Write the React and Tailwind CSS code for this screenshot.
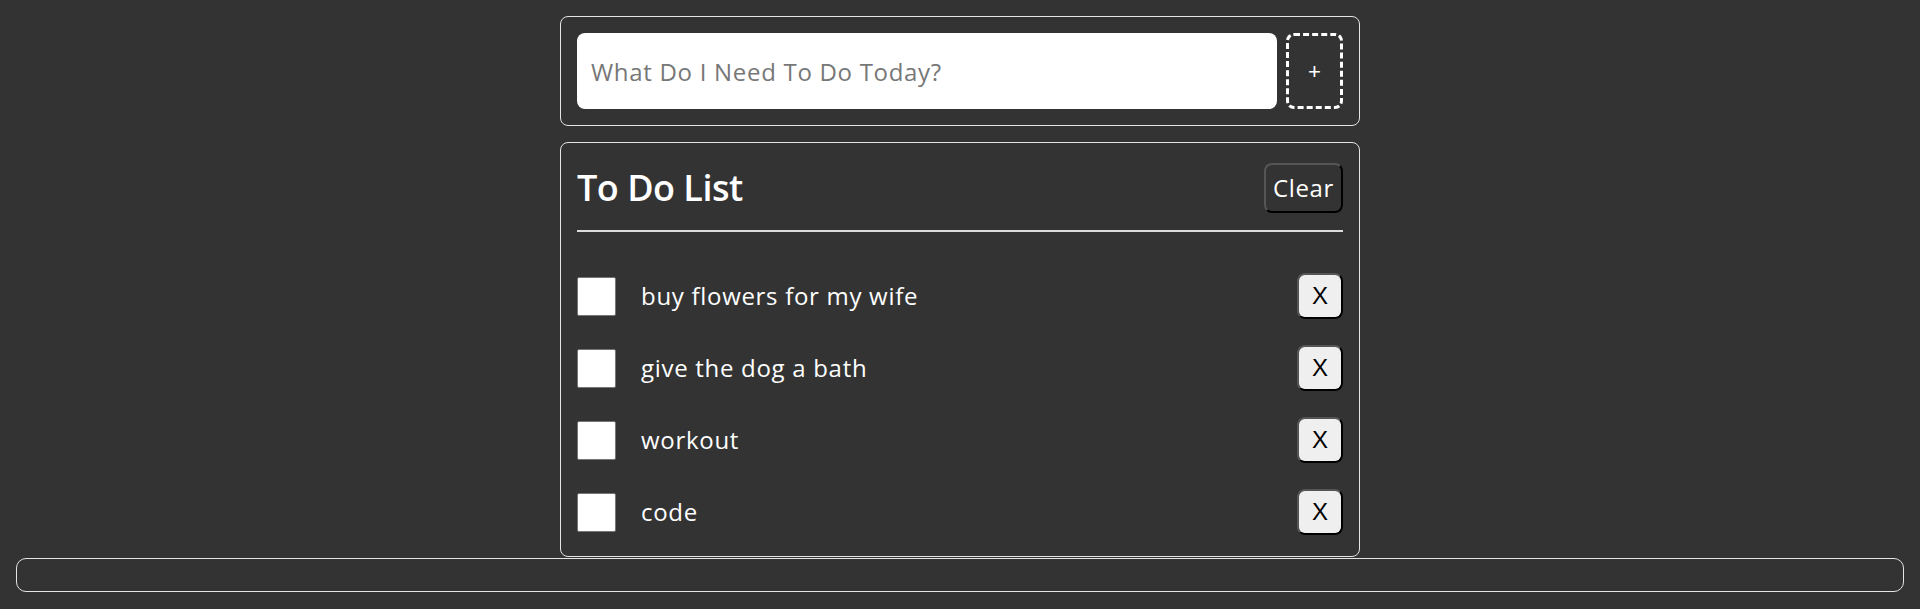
import React from "react";

const items = ["buy flowers for my wife", "give the dog a bath", "workout", "code"];

export default function App() {
  return (
    <div className="h-[609px] overflow-hidden bg-[#333333] pt-4 font-['Open_Sans',sans-serif] text-white">
      <div className="mx-auto w-[800px]">
        <div className="flex gap-[9px] rounded-lg border border-[#e5e5e5] p-4">
          <input
            className="h-[76px] flex-1 rounded-lg bg-white px-[14px] text-[24px] tracking-[0.7px] text-black outline-none placeholder:text-[#777]"
            placeholder="What Do I Need To Do Today?"
          />
          <button className="flex h-[76px] w-[57px] items-center justify-center rounded-lg border-[3px] border-dashed border-white font-['Liberation_Sans',sans-serif] text-[22px] text-white">
            +
          </button>
        </div>

        <div className="mt-4 rounded-lg border border-[#e5e5e5] px-4 pt-4 pb-[21px]">
          <div className="flex h-[58px] items-center justify-between">
            <h2 className="text-[36px] font-semibold tracking-[-0.5px]">To Do List</h2>
            <button className="h-[50px] w-[79px] rounded-lg border-2 border-t-[#555] border-l-[#555] border-b-black border-r-black bg-[#333333] text-[24px] tracking-[0.6px] text-white">
              Clear
            </button>
          </div>
          <div className="mt-[13px] h-[2px] bg-[#dcdcdc]" />
          <ul className="mt-[41px] flex flex-col gap-[26px]">
            {items.map((t) => (
              <li key={t} className="flex h-[46px] items-center">
                <div className="h-[39px] w-[39px] rounded-[2px] border border-[#767676] bg-white" />
                <span className="ml-[25px] flex-1 text-[24px] tracking-[0.7px]">{t}</span>
                <button className="flex h-[46px] w-[46px] items-center justify-center rounded-lg border-2 border-t-[#555] border-l-[#555] border-b-black border-r-black bg-[#efefef] font-['Liberation_Sans',sans-serif] text-[24px] text-black">
                  X
                </button>
              </li>
            ))}
          </ul>
        </div>
      </div>
      <div className="mx-4 mt-[1px] h-[34px] rounded-[10px] border border-[#e5e5e5]" />
    </div>
  );
}
